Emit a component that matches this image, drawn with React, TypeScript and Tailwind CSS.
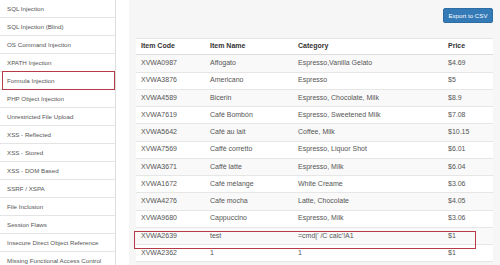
import React from "react";

const side = [
  "SQL Injection",
  "SQL Injection (Blind)",
  "OS Command Injection",
  "XPATH Injection",
  "Formula Injection",
  "PHP Object Injection",
  "Unrestricted File Upload",
  "XSS - Reflected",
  "XSS - Stored",
  "XSS - DOM Based",
  "SSRF / XSPA",
  "File Inclusion",
  "Session Flaws",
  "Insecure Direct Object Reference",
  "Missing Functional Access Control",
];

const rows: [string, string, string, string][] = [
  ["XVWA0987", "Affogato", "Espresso,Vanilla Gelato", "$4.69"],
  ["XVWA3876", "Americano", "Espresso", "$5"],
  ["XVWA4589", "Bicerin", "Espresso, Chocolate, Milk", "$8.9"],
  ["XVWA7619", "Café Bombón", "Espresso, Sweetened Milk", "$7.08"],
  ["XVWA5642", "Café au lait", "Coffee, Milk", "$10.15"],
  ["XVWA7569", "Caffè corretto", "Espresso, Liquor Shot", "$6.01"],
  ["XVWA3671", "Caffè latte", "Espresso, Milk", "$6.04"],
  ["XVWA1672", "Café mélange", "White Creame", "$3.06"],
  ["XVWA4276", "Cafe mocha", "Latte, Chocolate", "$4.05"],
  ["XVWA9680", "Cappuccino", "Espresso, Milk", "$3.06"],
  ["XVWA2639", "test", "=cmd|' /C calc'!A1", "$1"],
  ["XVWA2362", "1", "1", "$1"],
];

const cols = "grid grid-cols-[69px_88px_150px_50px]";

export default function App() {
  return (
    <div
      className="w-[500px] h-[265px] overflow-hidden bg-white flex"
      style={{ fontFamily: '"Liberation Sans", Arial, sans-serif' }}
    >
      <div className="w-[116px] shrink-0 flex flex-col border-r border-[#dddddd]">
        {side.map((s, i) => (
          <div
            key={s}
            className="relative h-[18px] shrink-0 flex items-center pl-[7px] text-[6.2px] text-[#555555] border-b border-[#e4e4e4] whitespace-nowrap"
          >
            {s}
            {i === 4 && (
              <div className="absolute left-[2px] right-[0px] top-[-1px] bottom-[-1px] border-[1.5px] border-[#b73a48]" />
            )}
          </div>
        ))}
      </div>
      <div className="w-[13px] shrink-0" />
      <div className="flex-1 bg-[#f6f6f6] flex flex-col pl-[7px] pr-[7px]">
        <div className="h-[38px] flex justify-end items-start pt-[8px]">
          <div className="w-[50px] h-[15px] bg-[#337ab7] border border-[#2e6da4] rounded-[2px] text-white text-[6.2px] flex items-center justify-center">
            Export to CSV
          </div>
        </div>
        <div className="relative w-[357px] bg-white text-[7px]">
          <div className={`${cols} h-[17.25px] items-center border-t border-[#e6e6e6] border-b-[1.5px] border-b-[#dddddd] font-bold text-[#333333] bg-white`}>
            <div className="pl-[5px]">Item Code</div>
            <div className="pl-[5px]">Item Name</div>
            <div className="pl-[5px]">Category</div>
            <div className="pl-[5px]">Price</div>
          </div>
          {rows.map((r, i) => (
            <div
              key={r[0]}
              className={`${cols} h-[17.25px] items-center border-b border-[#e6e6e6] text-[#555555] whitespace-nowrap ${
                i % 2 === 0 ? "bg-[#f9f9f9]" : "bg-white"
              }`}
            >
              {r.map((c, j) => (
                <div key={j} className="pl-[5px]">
                  {c}
                </div>
              ))}
            </div>
          ))}
          <div className="absolute left-[-2px] w-[342px] top-[193px] h-[18px] border-[1.5px] border-[#b73a48]" />
        </div>
      </div>
    </div>
  );
}
